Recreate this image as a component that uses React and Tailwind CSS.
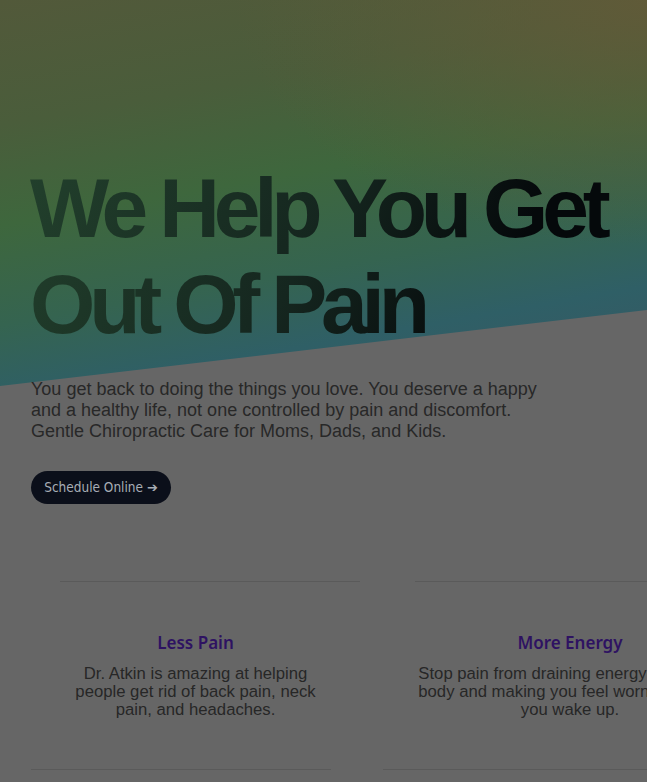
import React from 'react';

const benefits = [
    {
        title: 'Less Pain',
        text: 'Dr. Atkin is amazing at helping people get rid of back pain, neck pain, and headaches.',
        width: 'w-[329px]',
        textWidth: 'w-[268px]',
        lineOffset: 'ml-[29px]'
    },
    {
        title: 'More Energy',
        text: 'Stop pain from draining energy from your body and making you feel worn out when you wake up.',
        width: 'w-[374px]',
        textWidth: 'w-[325px]',
        lineOffset: 'ml-[32px]'
    }
];

const BenefitCard = ({ title, text, width, textWidth, lineOffset }) => (
    <div className={`${width} shrink-0 flex flex-col`}>
        <div className={`${lineOffset} w-[300px] h-px bg-[#5a5a5a]`} />
        <h3 className="mt-[49px] text-center text-[17px] leading-[24px] font-semibold text-[#2e1262] font-['Noto_Sans',sans-serif]">
            {title}
        </h3>
        <p className={`${textWidth} mx-auto mt-[10px] text-center text-[16.7px] leading-[18px] text-[#272727] font-['Liberation_Sans',Arial,sans-serif]`}>
            {text}
        </p>
        <div className="mt-[50px] w-[300px] h-px bg-[#5a5a5a]" />
    </div>
);

const App = () => {
    return (
        <div className="min-h-screen w-full overflow-hidden bg-[#666666]">
            <section className="h-[386px] pt-[160px] pl-[30px] [clip-path:polygon(0_0,100%_0,100%_310px,0_386px)] bg-[radial-gradient(ellipse_at_top_right,rgba(98,90,56,0.9)_0%,rgba(98,90,56,0)_45%),linear-gradient(170deg,#52593a_0%,#4a5d3b_25%,#3e673d_45%,#356450_65%,#2f5f66_80%,#3a5663_100%)]">
                <h1 className="text-[84px] leading-[96px] font-bold tracking-[-6.2px] font-['Liberation_Sans',Arial,sans-serif] bg-[linear-gradient(115deg,#22402c_0%,#15261f_45%,#05090b_75%)] bg-clip-text text-transparent">
                    We Help You Get
                    <br />
                    Out Of Pain
                </h1>
            </section>

            <div className="relative -mt-[7px] px-[31px]">
                <p className="w-[530px] text-[18px] leading-[21px] text-[#282828] font-['Liberation_Sans',Arial,sans-serif]">
                    You get back to doing the things you love. You deserve a happy and a healthy life, not one controlled by pain and discomfort. Gentle Chiropractic Care for Moms, Dads, and Kids.
                </p>
                <button className="mt-[29px] h-[33px] w-[140px] rounded-full bg-[#0b0f1a] text-[13.5px] text-[#a7adb5] font-['DejaVu_Sans_Condensed','DejaVu_Sans',sans-serif]">
                    Schedule Online <span className="font-bold font-['DejaVu_Sans',sans-serif] text-[13px]">➔</span>
                </button>
            </div>

            <div className="mt-[77px] flex gap-[23px] pl-[31px]">
                {benefits.map(b => (
                    <BenefitCard key={b.title} {...b} />
                ))}
            </div>
        </div>
    );
};

export default App;
